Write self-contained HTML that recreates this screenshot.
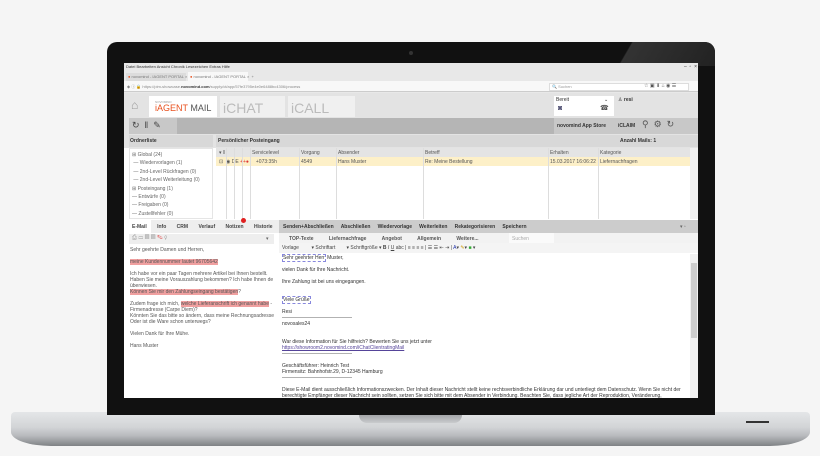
<!DOCTYPE html><html><head><meta charset="utf-8"><style>
*{margin:0;padding:0;box-sizing:border-box}
body{width:820px;height:456px;background:#f5f5f5;position:relative;overflow:hidden;font-family:"Liberation Sans",sans-serif;color:#333}
.a{position:absolute}
.t{position:absolute;font-size:5px;white-space:nowrap;line-height:6px}
.b{font-weight:bold}
</style></head><body>
<!-- base -->
<div class="a" style="left:11px;top:412px;width:799px;height:34px;border-radius:4px 4px 40px 40px/4px 4px 14px 14px;background:linear-gradient(#e4e6e8 0%,#d2d4d6 45%,#b8babd 70%,#7f8285 100%)"></div>
<div class="a" style="left:359px;top:413px;width:103px;height:10px;border-radius:0 0 8px 8px;background:linear-gradient(#9a9c9f,#c9cbcd)"></div>
<div class="a" style="left:746px;top:421px;width:23px;height:2px;background:#333"></div>
<!-- bezel -->
<div class="a" style="left:107px;top:42px;width:608px;height:373px;background:#111;border-radius:10px 10px 0 0"></div>
<div class="a" style="left:590px;top:42px;width:125px;height:24px;background:linear-gradient(120deg,#111 30%,#333 31%,#222);border-radius:0 10px 0 0"></div>
<div class="a" style="left:409px;top:51px;width:4px;height:4px;border-radius:50%;background:#333"></div>
<!-- screen -->
<div class="a" style="left:124px;top:63px;width:574px;height:335px;background:#fff;overflow:hidden">
 <div class="a" style="left:0;top:0;width:574px;height:30px;background:#e8e8e8"></div>
 <div class="t" style="left:2px;top:1px;font-size:4px">Datei Bearbeiten Ansicht Chronik Lesezeichen Extras Hilfe</div>
 <div class="t" style="left:560px;top:1px">–&nbsp; ▫&nbsp; ×</div>
 <div class="a" style="left:2px;top:10px;width:60px;height:8px;background:#dcdcdc"></div>
 <div class="a" style="left:64px;top:9px;width:60px;height:9px;background:#f8f8f8"></div>
 <div class="t" style="left:4px;top:11px;font-size:4px;color:#777"><span style="color:#e8501e">●</span> novomind - IAGENT PORTAL ×</div>
 <div class="t" style="left:66px;top:11px;font-size:4px;color:#777"><span style="color:#e8501e">●</span> novomind - IAGENT PORTAL ×&nbsp; +</div>
 <div class="a" style="left:0;top:18px;width:574px;height:11px;background:#f8f8f8;border-bottom:1px solid #ccc"></div>
 <div class="t" style="left:3px;top:21px;font-size:4px;color:#888">◆ ⓘ 🔒 https://pim-showcase.<b style="color:#333">novomind.com</b>/supply/ct/app/57fe3795e4e0e6488bc4306/process</div>
 <div class="a" style="left:425px;top:20px;width:140px;height:8px;background:#fff;border:1px solid #ddd"></div>
 <div class="t" style="left:428px;top:21px;font-size:4px;color:#999">🔍 Suchen</div>
 <div class="t" style="left:520px;top:20px;font-size:5px;color:#555">☆ ▣ ⬇ ⌂ ◉ ☰</div>
 <!-- app header -->
 <div class="a" style="left:0;top:30px;width:574px;height:55px;background:#e3e3e3"></div>
 <div class="a" style="left:25px;top:33px;width:68px;height:21px;background:#fff"></div>
 <div class="t" style="left:7px;top:36px;font-size:12px;line-height:12px;color:#999">⌂</div>
 <div class="t" style="left:31px;top:36px;font-size:3px;color:#999">NOVOMIND</div>
 <div class="t" style="left:31px;top:40px;font-size:9px;line-height:10px;color:#e8501e">iAGENT <span style="color:#555">MAIL</span></div>
 <div class="a" style="left:96px;top:33px;width:65px;height:21px;background:#f0f0f0"></div>
 <div class="t" style="left:99px;top:38px;font-size:14px;line-height:14px;color:#bbb">iCHAT</div>
 <div class="a" style="left:164px;top:33px;width:67px;height:21px;background:#f0f0f0"></div>
 <div class="t" style="left:167px;top:38px;font-size:14px;line-height:14px;color:#bbb">iCALL</div>
 <div class="a" style="left:430px;top:33px;width:60px;height:20px;background:#fff"></div>
 <div class="t" style="left:432px;top:34px">Bereit</div><div class="t" style="left:480px;top:34px">⌄</div>
 <div class="t" style="left:434px;top:42px;font-size:7px;line-height:8px;color:#557">◙</div>
 <div class="t" style="left:476px;top:42px;font-size:7px;line-height:8px;color:#555">☎</div>
 <div class="t" style="left:494px;top:34px">♙ <b>resi</b></div>
 <!-- toolbar -->
 <div class="a" style="left:5px;top:55px;width:569px;height:16px;background:#b5b5b5"></div>
 <div class="a" style="left:5px;top:55px;width:48px;height:16px;background:#c8c8c8"></div>
 <div class="t" style="left:8px;top:57px;font-size:9px;line-height:10px;color:#444">↻ &nbsp;‖ &nbsp;✎</div>
 <div class="a" style="left:430px;top:55px;width:144px;height:16px;background:#c8c8c8"></div>
 <div class="t b" style="left:433px;top:60px">novomind App Store</div>
 <div class="t b" style="left:494px;top:60px">iCLAIM</div>
 <div class="t" style="left:518px;top:56px;font-size:9px;line-height:10px;color:#555">⚲ &nbsp;⚙ &nbsp;↻</div>
 <!-- lists -->
 <div class="a" style="left:5px;top:72px;width:84px;height:12px;background:#d8d8d8"></div>
 <div class="t b" style="left:6px;top:75px">Ordnerliste</div>
 <div class="a" style="left:92px;top:72px;width:482px;height:12px;background:#d8d8d8"></div>
 <div class="t b" style="left:94px;top:75px">Persönlicher Posteingang</div>
 <div class="t b" style="left:496px;top:75px">Anzahl Mails: 1</div>
 <div class="a" style="left:5px;top:85px;width:84px;height:71px;background:#fff;border:1px solid #e5e5e5"></div>
 <div class="t" style="left:8px;top:88px;color:#666;line-height:8.4px">⊞ Global (24)<br>&nbsp;— Wiedervorlagen (1)<br>&nbsp;— 2nd-Level Rückfragen (0)<br>&nbsp;— 2nd-Level Weiterleitung (0)<br>⊞ Posteingang (1)<br>— Entwürfe (0)<br>— Freigaben (0)<br>— Zustellfehler (0)</div>
 <div class="a" style="left:92px;top:85px;width:474px;height:9px;background:#e4e4e4"></div>
 <div class="a" style="left:92px;top:94px;width:474px;height:9px;background:#fdf0c8"></div>
 <div class="a" style="left:566px;top:85px;width:8px;height:71px;background:#f0f0f0"></div>
 <div class="t" style="left:95px;top:87px;color:#555">▾ ‖</div>
 <div class="t" style="left:128px;top:87px;color:#555">Servicelevel</div>
 <div class="t" style="left:177px;top:87px;color:#555">Vorgang</div>
 <div class="t" style="left:214px;top:87px;color:#555">Absender</div>
 <div class="t" style="left:301px;top:87px;color:#555">Betreff</div>
 <div class="t" style="left:426px;top:87px;color:#555">Erhalten</div>
 <div class="t" style="left:476px;top:87px;color:#555">Kategorie</div>
 <div class="t" style="left:95px;top:96px;color:#555">⊡ &nbsp;◉ DE <span style="color:#d33">++●</span>&nbsp;&nbsp;&nbsp;&nbsp; +073:35h</div>
 <div class="t" style="left:177px;top:96px;color:#555">4549</div>
 <div class="t" style="left:214px;top:96px;color:#555">Hans Muster</div>
 <div class="t" style="left:301px;top:96px;color:#555">Re: Meine Bestellung</div>
 <div class="t" style="left:426px;top:96px;color:#555">15.03.2017 16:06:22</div>
 <div class="t" style="left:476px;top:96px;color:#555">Liefernachfragen</div>
 <div class="a" style="left:102px;top:85px;width:1px;height:71px;background:#ddd"></div>
 <div class="a" style="left:110px;top:85px;width:1px;height:71px;background:#ddd"></div>
 <div class="a" style="left:118px;top:85px;width:1px;height:71px;background:#ddd"></div>
 <div class="a" style="left:126px;top:85px;width:1px;height:71px;background:#ddd"></div>
 <div class="a" style="left:175px;top:85px;width:1px;height:71px;background:#ddd"></div>
 <div class="a" style="left:212px;top:85px;width:1px;height:71px;background:#ddd"></div>
 <div class="a" style="left:299px;top:85px;width:1px;height:71px;background:#ddd"></div>
 <div class="a" style="left:424px;top:85px;width:1px;height:71px;background:#ddd"></div>
 <div class="a" style="left:474px;top:85px;width:1px;height:71px;background:#ddd"></div>
 <!-- left bottom pane -->
 <div class="a" style="left:5px;top:157px;width:150px;height:13px;background:#eee"></div>
 <div class="a" style="left:5px;top:157px;width:22px;height:13px;background:#fff"></div>
 <div class="t b" style="left:8px;top:161px;color:#444;word-spacing:9px">E-Mail Info CRM Verlauf Notizen Historie</div>
 <div class="a" style="left:117px;top:155px;width:5px;height:5px;border-radius:50%;background:#e02020"></div>
 <div class="a" style="left:5px;top:171px;width:145px;height:10px;background:#eee"></div>
 <div class="t" style="left:8px;top:172px;font-size:6px;color:#999">⎙ ▭ ▤ ▤ <span style="color:#d33">✎</span> ⚲</div>
 <div class="t" style="left:142px;top:173px;color:#666">▾</div>
 <div class="t" style="left:6px;top:184px;color:#555;line-height:6px">Sehr geehrte Damen und Herren,<br><br><span style="background:#f0a0a0">meine Kundennummer lautet 96705642</span><br><br>Ich habe vor ein paar Tagen mehrere Artikel bei Ihnen bestellt.<br>Haben Sie meine Vorauszahlung bekommen? Ich habe Ihnen de<br>überwiesen.<br><span style="background:#f0a0a0">Können Sie mir den Zahlungseingang bestätigen</span>?<br><br>Zudem frage ich mich, <span style="background:#f0a0a0">welche Lieferanschrift ich genannt habe</span> -<br>Firmenadresse (Carpe Diem)?<br>Könnten Sie das bitte so ändern, dass meine Rechnungsadresse<br>Oder ist die Ware schon unterwegs?<br><br>Vielen Dank für Ihre Mühe.<br><br>Hans Muster</div>
 <!-- right bottom pane -->
 <div class="a" style="left:155px;top:157px;width:419px;height:13px;background:#ccc"></div>
 <div class="t b" style="left:159px;top:161px;color:#333;word-spacing:1px">Senden+Abschließen &nbsp; Abschließen &nbsp; Wiedervorlage &nbsp; Weiterleiten &nbsp; Rekategorisieren &nbsp; Speichern</div>
 <div class="t" style="left:556px;top:161px;color:#666">▾ ▫</div>
 <div class="a" style="left:155px;top:170px;width:419px;height:10px;background:#f2f2f2"></div>
 <div class="t b" style="left:165px;top:173px;color:#555;word-spacing:14px">TOP-Texte Liefernachfrage Angebot Allgemein Weitere...</div>
 <div class="a" style="left:385px;top:170px;width:45px;height:10px;background:#fafafa"></div>
 <div class="t" style="left:388px;top:173px;color:#aaa">Suchen</div>
 <div class="a" style="left:155px;top:180px;width:419px;height:10px;background:#f4f4f4"></div>
 <div class="t" style="left:158px;top:182px;color:#444">Vorlage&nbsp;&nbsp;&nbsp;&nbsp;&nbsp;&nbsp;&nbsp;&nbsp; ▾ Schriftart&nbsp;&nbsp;&nbsp;&nbsp;&nbsp;&nbsp;&nbsp; ▾ Schriftgröße ▾ <b>B</b> <i>I</i> <u>U</u> abc | ≡ ≡ ≡ ≡ | ☰ ☰ ⇤ ⇥ | <span style="color:#23a">A</span>▾ <span style="color:#c90">✎</span>▾ <span style="color:#3a3">■</span> ▾</div>
 <div class="a" style="left:566px;top:191px;width:8px;height:144px;background:#f0f0f0"></div>
 <div class="a" style="left:567px;top:200px;width:6px;height:75px;background:#ccc"></div>
 <div class="t" style="left:158px;top:192px;color:#333;line-height:6px"><span style="border:1px dashed #88d">Sehr geehrter Herr</span> Muster,<br><br>vielen Dank für Ihre Nachricht.<br><br>Ihre Zahlung ist bei uns eingegangen.<br><br><br><span style="border:1px dashed #88d">Viele Grüße</span><br><br>Resi<br>——————————————<br>novosales24<br><br><br>War diese Information für Sie hilfreich? Bewerten Sie uns jetzt unter<br><span style="color:#549;text-decoration:underline">https://showroom2.novomind.com/iChatClientratingMail</span><br>——————————————<br><br>Geschäftsführer: Heinrich Test<br>Firmensitz: Bahnhofstr.29, D-12345 Hamburg<br>——————————————<br><br>Diese E-Mail dient ausschließlich Informationszwecken. Der Inhalt dieser Nachricht stellt keine rechtsverbindliche Erklärung dar und unterliegt dem Datenschutz. Wenn Sie nicht der<br>berechtigte Empfänger dieser Nachricht sein sollten, setzen Sie sich bitte mit dem Absender in Verbindung. Beachten Sie, dass jegliche Art der Reproduktion, Veränderung,</div>
</div>
</body></html>
